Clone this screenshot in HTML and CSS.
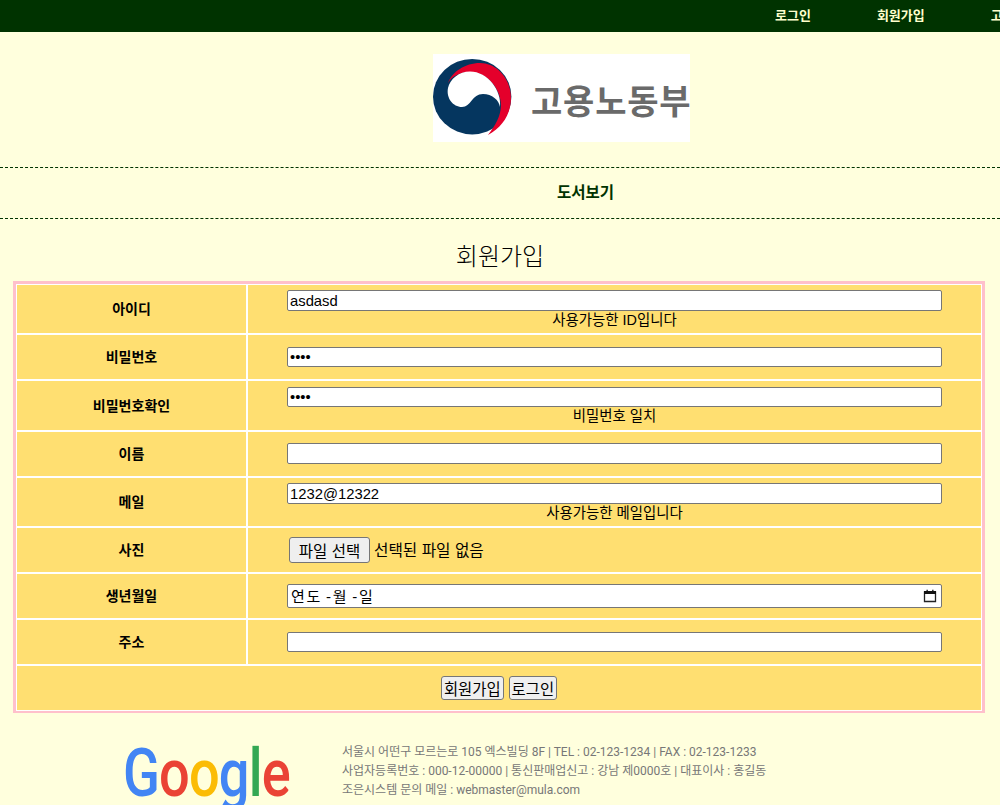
FILE: index.html
```html
<!DOCTYPE html>
<html lang="ko">
<head>
<meta charset="utf-8">
<title>회원가입</title>
<link rel="stylesheet" href="styles.css">
</head>
<body>
<nav class="topbar">
  <a class="toplink" href="#">로그인</a>
  <a class="toplink" href="#">회원가입</a>
  <a class="toplink" href="#">고객센터</a>
</nav>
<header class="brand">
  <div class="logo">
    <svg class="taegeuk" width="80" height="88" viewBox="0 0 80 88" aria-hidden="true">
      <ellipse cx="39.200" cy="42.700" rx="39.200" ry="37.700" fill="#05365f"/>
      <path d="M15 29C19 18 32 9 47 9C64 9 78 25 78 44C78 60 69 74 55 81C62 72 68 62 68 51C68 36 55 18 37 18C27 18 19 22 15 29Z" fill="#e4002b"/>
      <path d="M15 34C13 44 20 53 29 53C38 53 39 40 50 40C59 40 66 46 67 53C69 37 55 17.500 37 17.500C26 17.500 17 25 15 34Z" fill="#fff"/>
    </svg>
    <span class="logo-text">고용노동부</span>
  </div>
</header>
<div class="menu"><a class="menu-link" href="#">도서보기</a></div>
<h1 class="title">회원가입</h1>
<form class="form-frame">
  <table class="form-table">
    <tr class="row-tall">
      <th>아이디</th>
      <td><input class="field" type="text" value="asdasd"><div class="note">사용가능한 ID입니다</div></td>
    </tr>
    <tr>
      <th>비밀번호</th>
      <td><input class="field field-short" type="password" value="asdf"></td>
    </tr>
    <tr class="row-tall row-check">
      <th>비밀번호확인</th>
      <td><input class="field field-short" type="password" value="asdf"><div class="note">비밀번호 일치</div></td>
    </tr>
    <tr>
      <th>이름</th>
      <td><input class="field field-up" type="text"></td>
    </tr>
    <tr class="row-tall">
      <th>메일</th>
      <td><input class="field" type="text" value="1232@12322"><div class="note">사용가능한 메일입니다</div></td>
    </tr>
    <tr>
      <th>사진</th>
      <td><div class="file-line"><button class="file-btn" type="button">파일 선택</button><span class="file-text">선택된 파일 없음</span></div></td>
    </tr>
    <tr>
      <th>생년월일</th>
      <td>
        <div class="date-field">
          <span class="date-text">연도 -월 -일</span>
          <svg class="cal" width="14" height="14" viewBox="0 0 14 14" aria-hidden="true">
            <path d="M1.500 3h11v9.500h-11z" fill="none" stroke="#222" stroke-width="1.300"/>
            <path d="M1 2h12v3H1zM3.500 .8h1.300v2H3.500zM9.200 .8h1.300v2H9.200z" fill="#111"/>
          </svg>
        </div>
      </td>
    </tr>
    <tr>
      <th>주소</th>
      <td><input class="field field-short" type="text"></td>
    </tr>
    <tr>
      <td class="actions" colspan="2">
        <div class="action-row">
          <button class="act-btn" type="button">회원가입</button>
          <button class="act-btn" type="button">로그인</button>
        </div>
      </td>
    </tr>
  </table>
</form>
<footer class="foot">
  <div class="google"><span class="g-blue">G</span><span class="g-red">o</span><span class="g-yellow">o</span><span class="g-blue">g</span><span class="g-green">l</span><span class="g-red">e</span></div>
  <div class="foot-text">
    <p>서울시 어떤구 모르는로 105 엑스빌딩 8F | TEL : 02-123-1234 | FAX : 02-123-1233</p>
    <p>사업자등록번호 : 000-12-00000 | 통신판매업신고 : 강남 제0000호 | 대표이사 : 홍길동</p>
    <p>조은시스템 문의 메일 : webmaster@mula.com</p>
  </div>
</footer>
</body>
</html>
```
FILE: styles.css
```css
* { box-sizing: border-box; }
html, body { margin: 0; padding: 0; height: 805px; overflow: hidden; }
body {
  background: #ffffdd;
  color: #000;
  font-family: "Liberation Sans", "Noto Sans CJK KR", sans-serif;
}
.topbar {
  display: flex;
  height: 32px;
  align-items: center;
  gap: 66px;
  padding: 0 0 3px 775px;
  background: #003300;
  overflow: hidden;
  white-space: nowrap;
}
.toplink {
  flex: none;
  color: #ffffcc;
  font-size: 13px;
  font-weight: 700;
  text-decoration: none;
}
.brand { padding: 22px 0 25px 433px; }
.logo {
  display: flex;
  align-items: center;
  width: 257px;
  height: 88px;
  background: #fff;
  overflow: hidden;
}
.taegeuk { flex: none; margin-right: 18px; }
.logo-text {
  flex: none;
  padding-top: 4px;
  color: #6a6a6a;
  font-family: "Noto Sans CJK KR", sans-serif;
  font-size: 34px;
  font-weight: 700;
  letter-spacing: .8px;
  line-height: 1;
  white-space: nowrap;
}
.menu {
  height: 52px;
  padding-left: 557px;
  border-top: 1px dashed #003300;
  border-bottom: 1px dashed #003300;
  line-height: 50px;
}
.menu-link {
  color: #003300;
  font-size: 15.500px;
  font-weight: 700;
  text-decoration: none;
}
.title {
  margin: 0;
  padding-top: 21px;
  height: 62px;
  text-align: center;
  font-size: 24px;
  font-weight: 300;
  line-height: 34px;
}
.form-frame {
  width: 972px;
  margin-left: 13px;
  padding: 1px;
  background: #fff;
  border: 3px solid #ffc0cb;
  border-bottom-width: 2px;
}
.form-table {
  width: 100%;
  border-collapse: separate;
  border-spacing: 0;
}
.form-table th,
.form-table td {
  height: 46px;
  padding: 0;
  background: #ffdf71;
  border-bottom: 2px solid #fff;
}
.form-table tr:last-child td { border-bottom: 0; height: 44px; }
.form-table .row-tall th,
.form-table .row-tall td { height: 50px; }
.form-table .row-check th,
.form-table .row-check td { height: 51px; }
.form-table th {
  width: 231px;
  padding-bottom: 2px;
  border-right: 2px solid #fff;
  font-size: 14px;
  font-weight: 700;
}
.form-table td { padding-left: 39px; vertical-align: middle; }
.form-table .row-tall td { vertical-align: top; padding-top: 5px; }
.form-table .row-check td { padding-top: 6px; }
.field {
  display: block;
  width: 655px;
  height: 21px;
  padding: 1px 2px;
  border: 1px solid #767676;
  border-radius: 2px;
  background: #fff;
  font-family: inherit;
  font-size: 14.800px;
}
.field-short { height: 20px; }
.field-up { margin-top: -1px; }
.note {
  width: 655px;
  text-align: center;
  font-size: 14.400px;
  line-height: 18px;
}
.file-line { display: flex; align-items: center; padding-left: 2px; margin-top: -1px; }
.file-btn {
  width: 81px;
  height: 26px;
  padding: 0;
  border: 1px solid #767676;
  border-radius: 3px;
  background: #efefef;
  font-family: inherit;
  font-size: 15.500px;
}
.file-text { margin-left: 4px; font-size: 15.700px; }
.date-field {
  display: flex;
  align-items: center;
  justify-content: space-between;
  width: 655px;
  height: 24px;
  padding: 0 4px 1px 3px;
  border: 1px solid #767676;
  border-radius: 2px;
  background: #fff;
  font-size: 15px;
}
.date-text { letter-spacing: 1.600px; word-spacing: -1.500px; }
.form-table .actions { padding: 0; }
.action-row { display: flex; justify-content: center; gap: 5px; }
.act-btn {
  height: 24px;
  padding: 0 2px;
  border: 1px solid #767676;
  border-radius: 3px;
  background: #efefef;
  font-family: inherit;
  font-size: 15.400px;
}
.foot { display: flex; padding: 28px 0 0 123px; }
.google {
  flex: none;
  width: 219px;
  height: 84px;
  font-family: Roboto, sans-serif;
  font-size: 66px;
  font-weight: 500;
  line-height: 66px;
  letter-spacing: -1px;
  transform: scaleX(.82);
  transform-origin: left top;
  white-space: nowrap;
}
.g-blue { color: #4285f4; }
.g-red { color: #ea4335; }
.g-yellow { color: #fbbc05; }
.g-green { color: #34a853; }
.foot-text {
  margin-top: -6px;
  color: #777;
  font-family: Roboto, "Noto Sans CJK KR", sans-serif;
  font-size: 12px;
  padding-top: 8px;
}
.foot-text p { margin: 0; height: 19px; line-height: 19px; white-space: nowrap; }
```
